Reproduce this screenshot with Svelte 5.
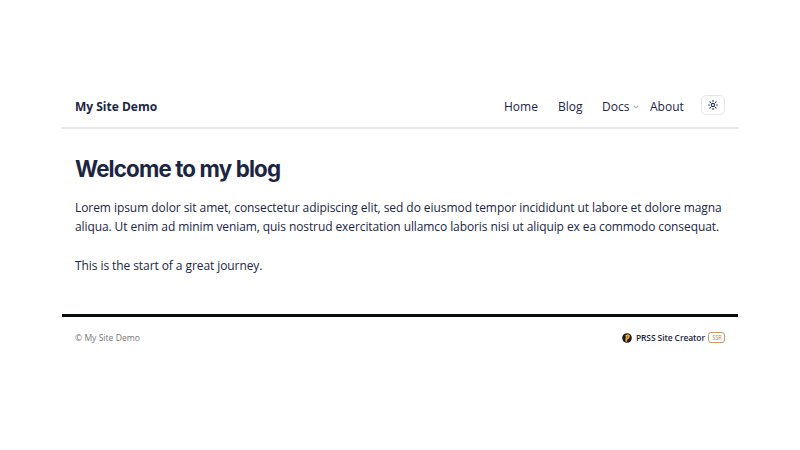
<script>
  const rays = [0, 45, 90, 135, 180, 225, 270, 315];
  const paragraph = [
    'Lorem ipsum dolor sit amet, consectetur adipiscing elit, sed do eiusmod tempor incididunt ut labore et dolore magna',
    'aliqua. Ut enim ad minim veniam, quis nostrud exercitation ullamco laboris nisi ut aliquip ex ea commodo consequat.'
  ];
</script>

<div class="page">
  <header>
    <a class="brand" href="#home">My Site Demo</a>
    <nav>
      <a class="home" href="#home">Home</a>
      <a class="blog" href="#blog">Blog</a>
      <a class="docs" href="#docs">
        <span>Docs</span>
        <svg width="6" height="4" viewBox="0 0 6 4"><path d="M.7.7 3 2.9 5.3.7" fill="none" stroke="#bbbec6" stroke-width="1.2" /></svg>
      </a>
      <a class="about" href="#about">About</a>
    </nav>
    <button aria-label="Toggle theme">
      <svg width="10" height="10" viewBox="0 0 10 10" fill="none" stroke="#2a3350" stroke-width="1.1" stroke-linecap="round">
        <circle cx="5" cy="5" r="1.65" />
        {#each rays as angle}
          <path d="M5 .6v.8" transform="rotate({angle} 5 5)" />
        {/each}
      </svg>
    </button>
  </header>

  <main>
    <h1>Welcome to my blog</h1>
    <p>{#each paragraph as line, i}<span class="line line{i}">{line}</span>{/each}</p>
    <p><span class="line last">This is the start of a great journey.</span></p>
  </main>

  <footer>
    <span class="copy">© My Site Demo</span>
    <div class="credit">
      <svg width="10" height="10" viewBox="0 0 10 10">
        <circle cx="5" cy="5" r="4.8" fill="#17171c" />
        <path d="M3.2 2.3 5.4 1.3Q8.1 1.3 7.8 3.7 7.4 5.8 5.4 6.2L5 9 3.2 8.2 3.8 4.3Z" fill="#f0a92f" />
        <path d="M5.5 3 5.2 4.7" stroke="#55402a" stroke-width=".7" />
      </svg>
      <span class="name">PRSS Site Creator</span>
      <span class="badge"><span>SSR</span></span>
    </div>
  </footer>
</div>

<style>
  :global(body) { background: #fff; }
  .page {
    box-sizing: border-box;
    width: 800px;
    height: 450px;
    padding: 81px 62px 0 62px;
    background: #fff;
    color: #1c2542;
    font: 12px/19px "Open Sans", "Noto Sans", sans-serif;
    white-space: nowrap;
  }
  a { color: inherit; text-decoration: none; }
  header {
    box-sizing: border-box;
    display: flex;
    align-items: center;
    width: 676px;
    height: 48px;
    padding: 4px 13px 0;
    border-bottom: 2px solid #e9e9e9;
  }
  .brand { font-weight: 700; width: 429px; }
  nav { display: flex; width: 197px; }
  .home { width: 54px; }
  .blog { width: 44px; }
  .docs { width: 48px; display: flex; align-items: center; gap: 4px; }
  .docs svg { margin-top: 1px; }
  button {
    box-sizing: border-box;
    display: flex;
    align-items: center;
    justify-content: center;
    width: 24px;
    height: 20px;
    margin: 0 0 2px;
    padding: 0;
    border: 1px solid #e7e7ea;
    border-radius: 5px;
    background: #fff;
  }
  main { padding: 25px 13px 0; height: 185px; box-sizing: border-box; }
  h1 {
    margin: 0 0 14px;
    font: 700 22.3px/30px Inter, sans-serif;
    letter-spacing: -0.85px;
  }
  p { margin: 0 0 20px; }
  .line { display: table; }
  .line0 { letter-spacing: -0.065px; }
  .line1 { letter-spacing: -0.093px; }
  .last { letter-spacing: -0.08px; }
  footer {
    box-sizing: border-box;
    display: flex;
    align-items: center;
    justify-content: space-between;
    width: 676px;
    height: 36px;
    padding: 8px 13px 0;
    border-top: 3px solid #080c0b;
    font-size: 8.6px;
  }
  .copy { color: #777; padding-top: 2px; }
  .credit { display: flex; align-items: center; }
  .name { margin: 0 3px 0 4px; font-size: 8.5px; font-weight: 600; letter-spacing: -0.1px; }
  .badge {
    box-sizing: border-box;
    display: flex;
    align-items: center;
    justify-content: center;
    width: 17px;
    height: 11px;
    border: 1px solid #c89a6c;
    border-radius: 3px;
    color: #b8793c;
    font-size: 7px;
    line-height: 9px;
  }
  .badge span { transform: scaleX(0.75); }
</style>
